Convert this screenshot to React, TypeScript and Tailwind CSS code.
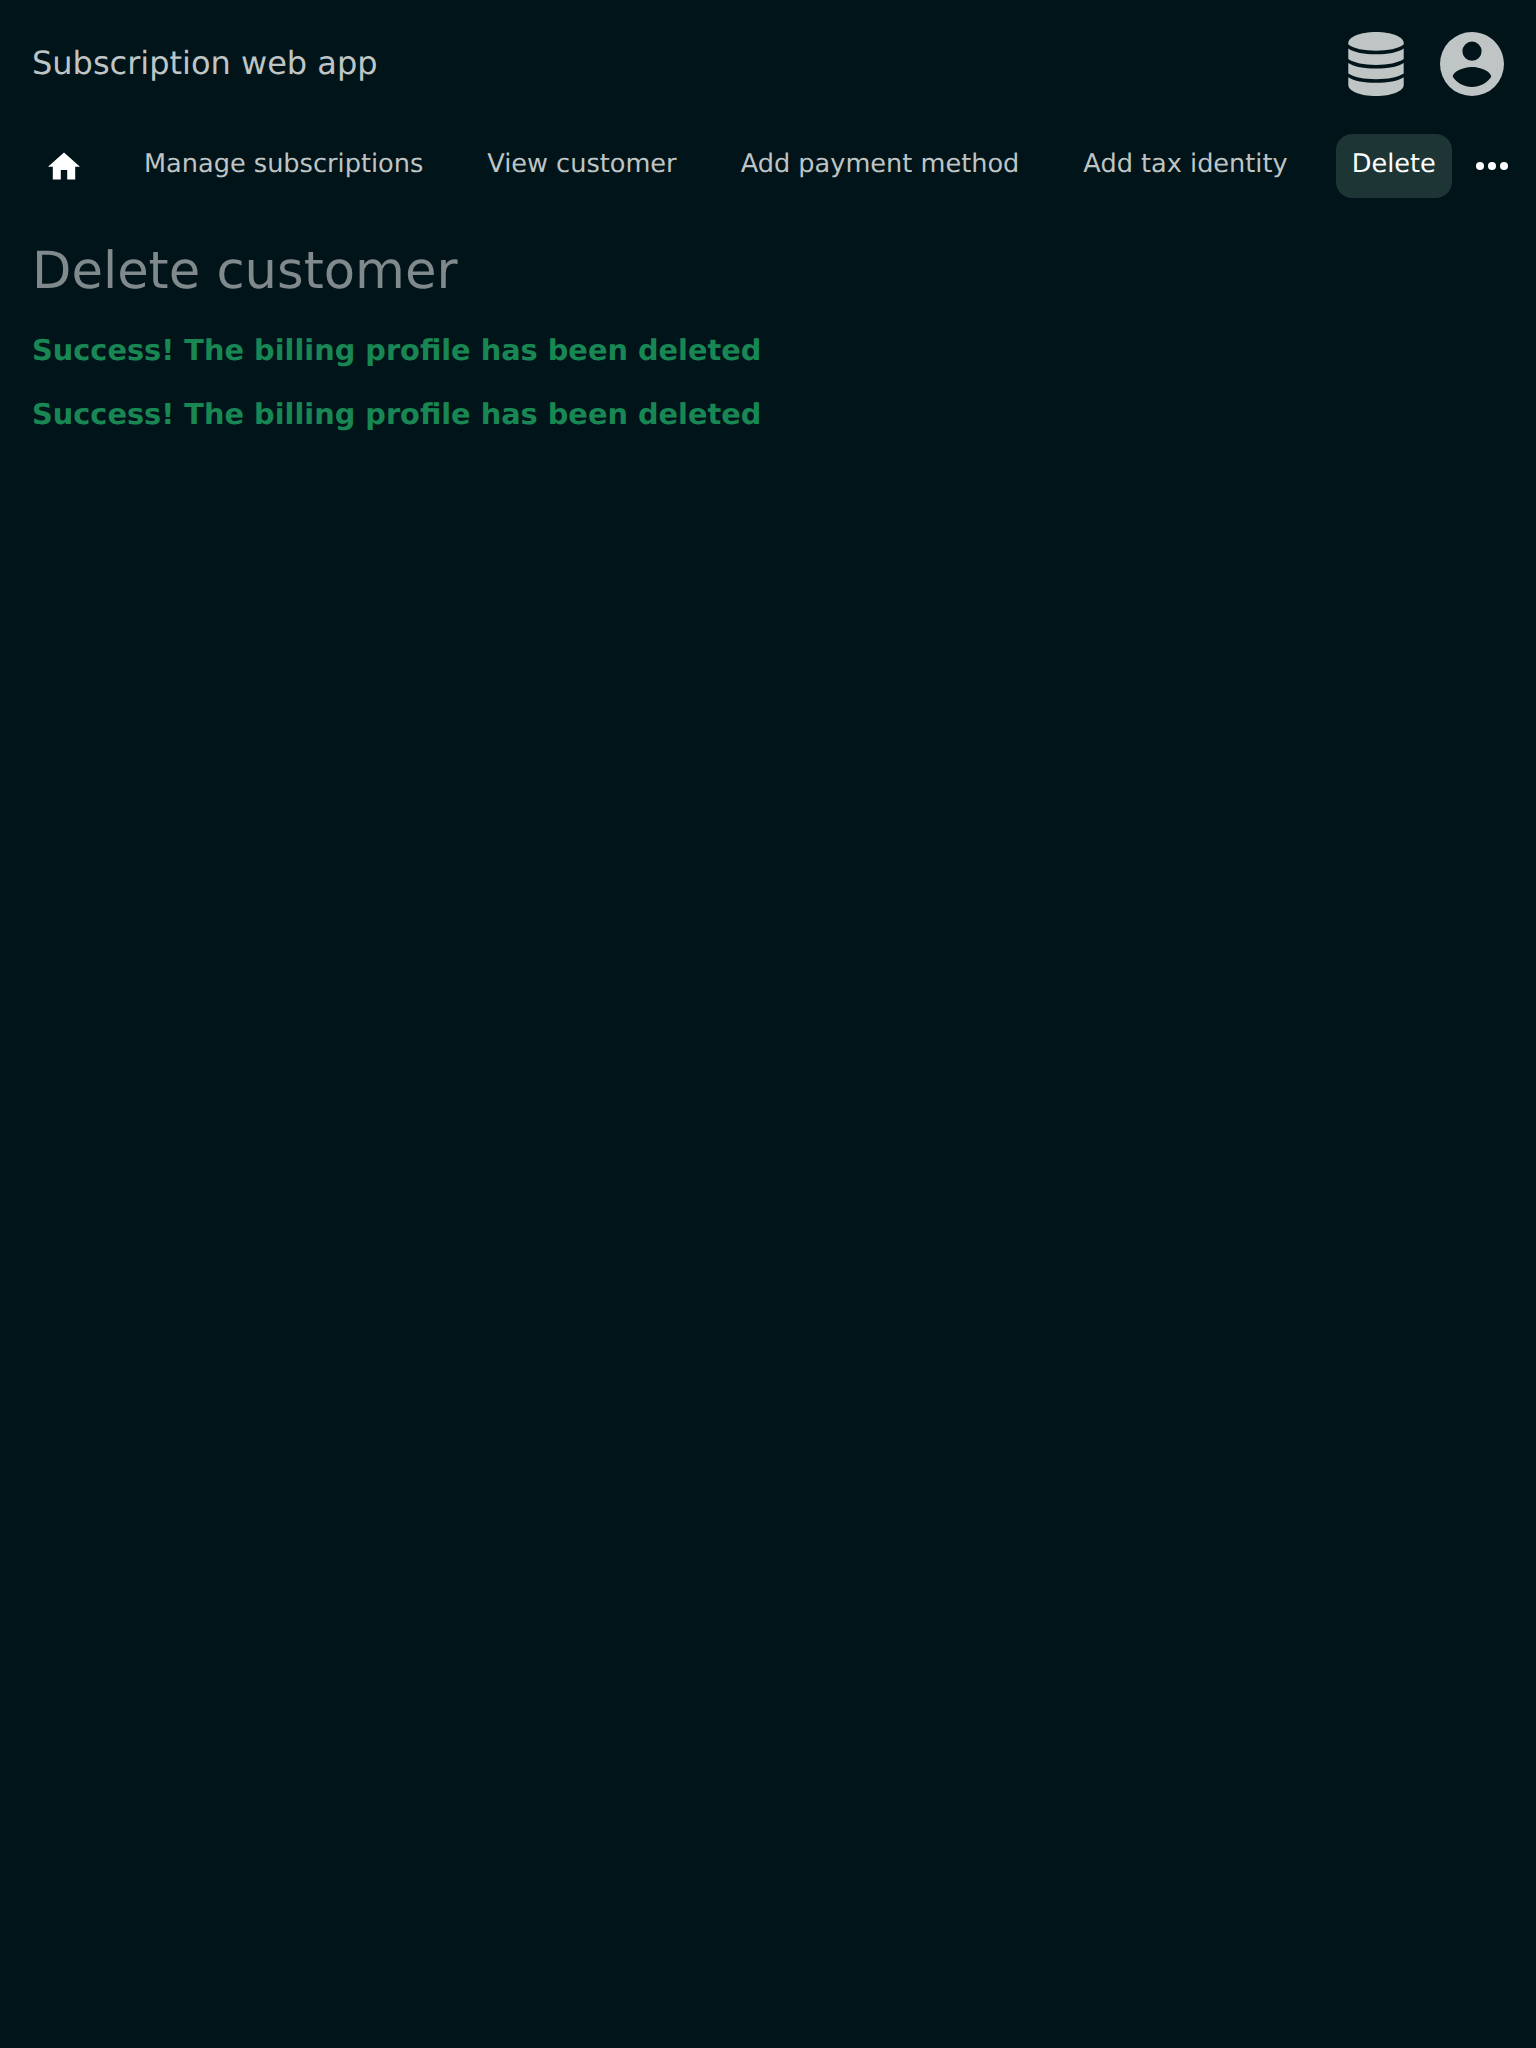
const links = ["Manage subscriptions", "View customer", "Add payment method", "Add tax identity"];

export default function App() {
  return (
    <div className="min-h-[2048px] bg-[#001419] text-[#bfc4c5] font-['DejaVu_Sans',sans-serif] [text-rendering:geometricPrecision]">
      <header className="flex h-32 items-center justify-between px-8">
        <div className="pb-0.5 text-[32px] leading-[48px]">Subscription web app</div>
        <div className="flex gap-9">
          <svg className="h-16 w-14" viewBox="0 0 56 64" fill="currentColor">
            <path d="M0.300 11C0.300 5 12 0 28 0S55.700 5 55.700 11V12.500C50 16.700 40 18.700 28 18.700S6 16.700 0.300 12.500Z" />
            <path d="M0.300 16.500C6 20.500 16 22.300 28 22.300S50 20.500 55.700 16.500V27C50 31 40 32.900 28 32.900S6 31 0.300 27Z" />
            <path d="M0.300 31C6 34.800 16 36.500 28 36.500S50 34.800 55.700 31V41.500C50 45.300 40 47.200 28 47.200S6 45.300 0.300 41.500Z" />
            <path d="M0.300 45.200C6 49 16 50.800 28 50.800S50 49 55.700 45.200V53C55.700 59 44 64 28 64S0.300 59 0.300 53Z" />
          </svg>
          <svg className="size-16" viewBox="2 2 20 20" fill="currentColor">
            <path d="M12,19.200C9.500,19.200 7.290,17.920 6,16C6.030,14 10,12.900 12,12.900C14,12.900 17.970,14 18,16C16.710,17.920 14.500,19.200 12,19.200M12,5A3,3 0 0,1 15,8A3,3 0 0,1 12,11A3,3 0 0,1 9,8A3,3 0 0,1 12,5M12,2A10,10 0 0,0 2,12A10,10 0 0,0 12,22A10,10 0 0,0 22,12C22,6.470 17.500,2 12,2Z" />
          </svg>
        </div>
      </header>
      <nav className="flex h-[76px] items-start px-8 pt-[6px] text-[25.6px] leading-[38px]">
        <a className="flex size-16 shrink-0 items-center justify-center text-white">
          <svg className="h-[28px] w-8" viewBox="2 2.750 20 17.500" fill="currentColor">
            <path d="M10,20V14H14V20H19V12H22L12,3L2,12H5V20H10Z" />
          </svg>
        </a>
        <div className="ml-8 flex gap-8">
          {links.map((label) => (
            <a key={label} className="h-16 whitespace-nowrap rounded-2xl px-4 pt-[11px]">{label}</a>
          ))}
          <a className="h-16 rounded-2xl bg-[#1e3535] px-4 pt-[11px] text-white">Delete</a>
        </div>
        <a className="ml-6 flex h-16 w-8 shrink-0 items-center text-white">
          <svg className="h-2 w-8" viewBox="0 0 32 8" fill="currentColor">
            <circle cx="4" cy="4" r="4" />
            <circle cx="16" cy="4" r="4" />
            <circle cx="28" cy="4" r="4" />
          </svg>
        </a>
      </nav>
      <main className="px-8 pt-[29px]">
        <h1 className="text-[51.2px] leading-[76px] text-[#80898c]">Delete customer</h1>
        <p className="mt-[9px] text-[28.8px] font-bold leading-[64px] text-[#198754]">Success! The billing profile has been deleted</p>
        <p className="text-[28.8px] font-bold leading-[64px] text-[#198754]">Success! The billing profile has been deleted</p>
      </main>
    </div>
  );
}
